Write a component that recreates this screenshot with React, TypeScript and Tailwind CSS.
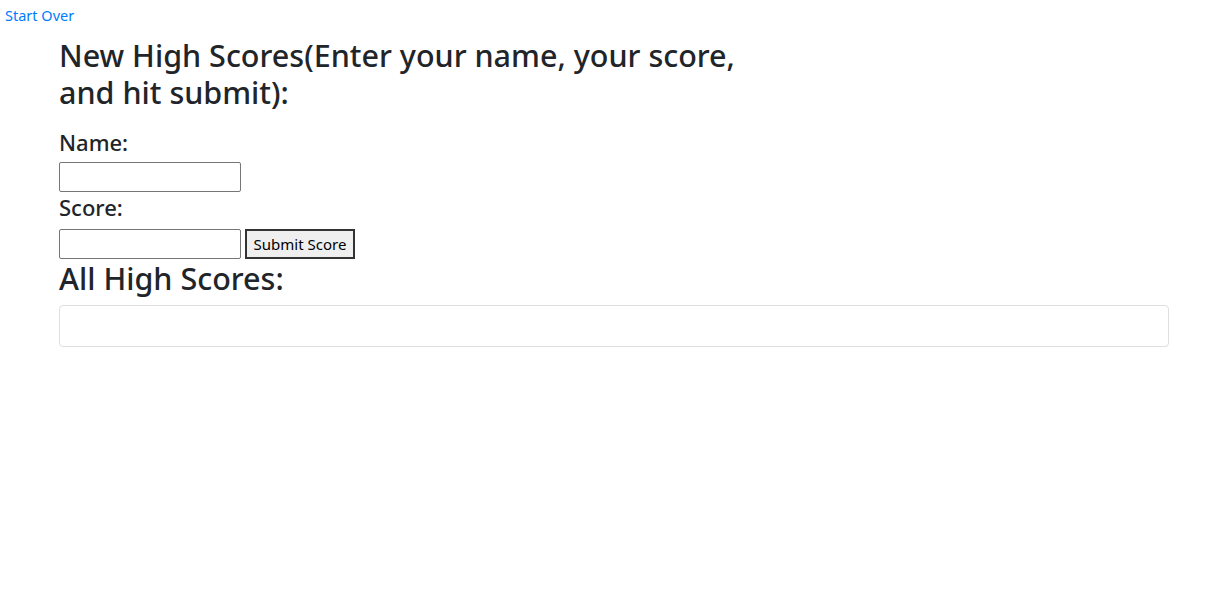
export default function App() {
  return (
    <div className="min-h-[594px] bg-white text-[#212529] font-['Noto_Sans',sans-serif]">
      <a href="#" className="block pl-[5px] pt-[5px] text-[14.5px] leading-[20px] text-[#007bff]">
        Start Over
      </a>
      <div className="ml-[59px] w-[1110px]">
        <h3 className="mt-[12px] w-[720px] text-[30.5px] font-medium leading-[36.5px]">
          New High Scores(Enter your name, your score, and hit submit):
        </h3>
        <h5 className="mt-[19px] text-[22px] font-medium leading-[26.4px]">Name:</h5>
        <input type="text" className="mt-[7px] block h-[30px] w-[182px] rounded-[2px] border border-[#767676] bg-white" />
        <h5 className="mt-[2px] text-[22px] font-medium leading-[26.4px]">Score:</h5>
        <div className="mt-[8px] flex items-center gap-[4px]">
          <input type="text" className="h-[30px] w-[182px] rounded-[2px] border border-[#767676] bg-white" />
          <button className="h-[30px] w-[110px] border-2 border-[#333] bg-[#efefef] text-[15px] text-black">
            Submit Score
          </button>
        </div>
        <h3 className="mt-[1px] text-[30.5px] font-medium leading-[36.5px]">All High Scores:</h3>
        <div className="mt-[9px] h-[42px] rounded-[4px] border border-[#dfdfdf]" />
      </div>
    </div>
  );
}
